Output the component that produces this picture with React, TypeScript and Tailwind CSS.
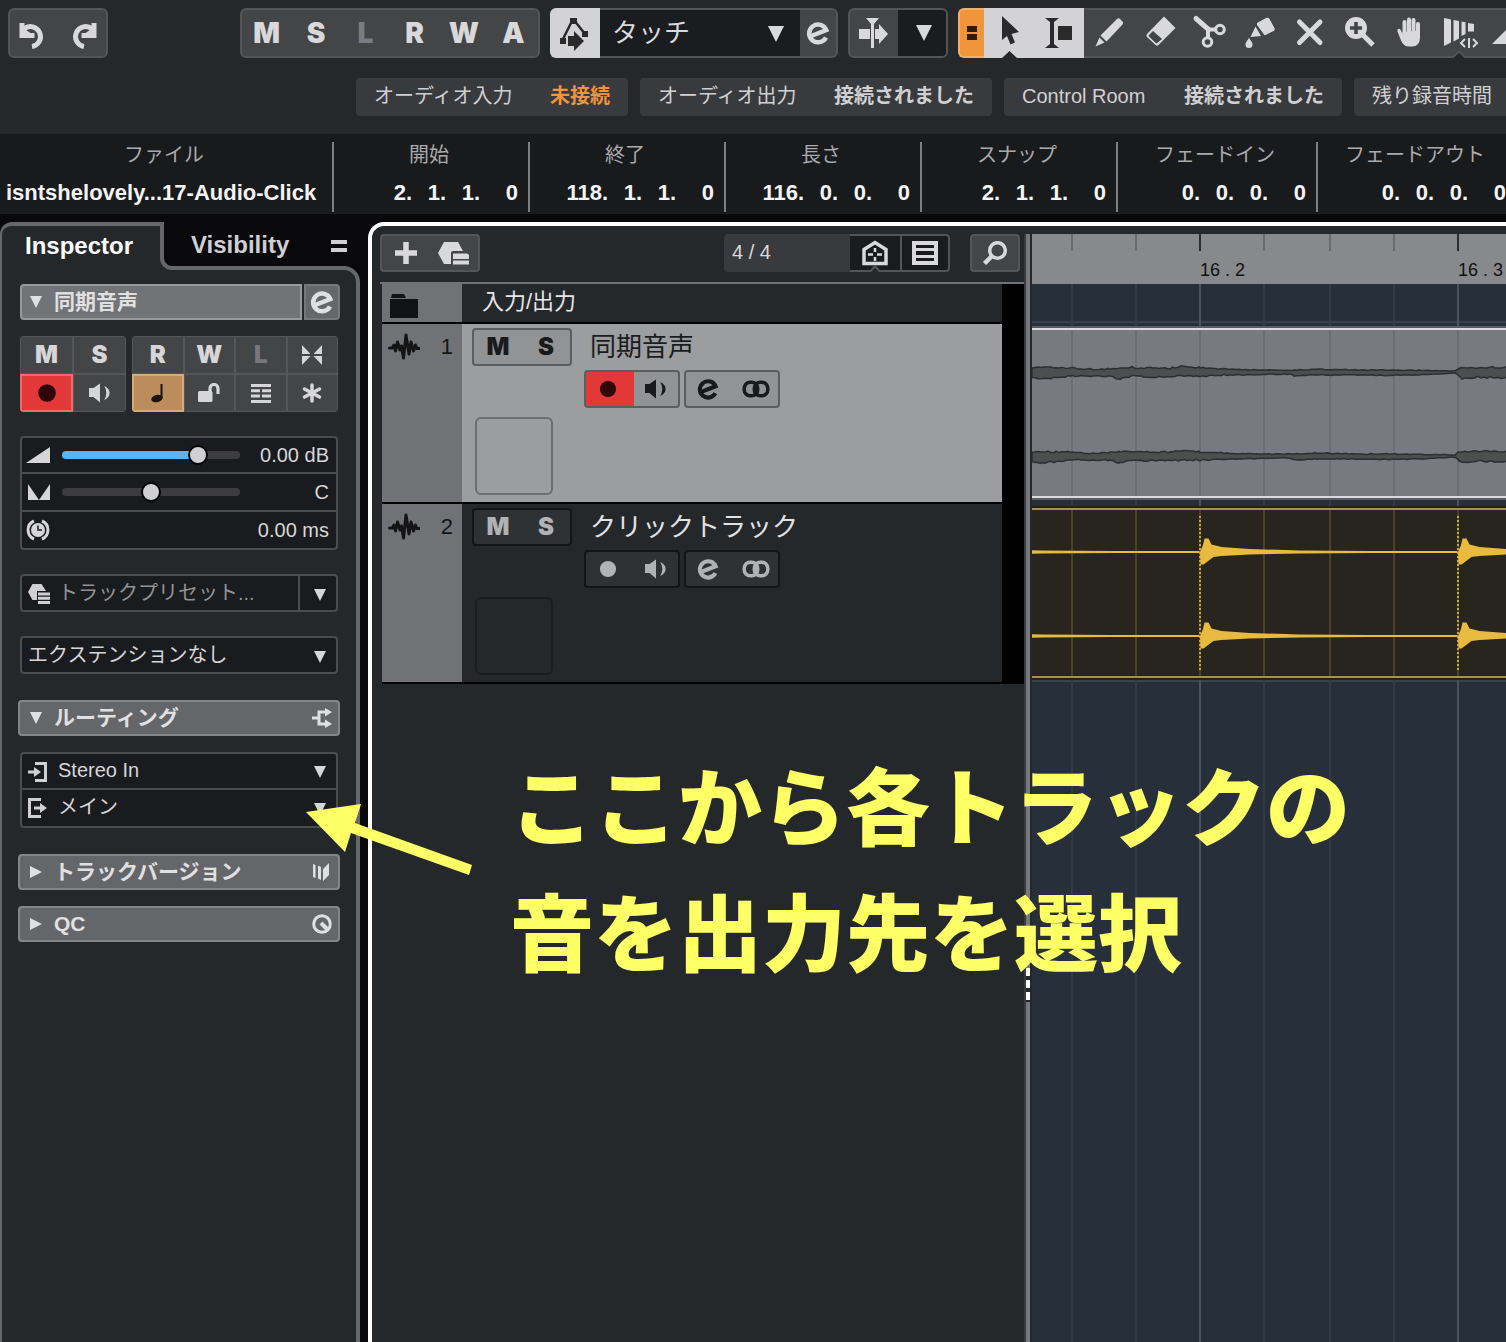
import type { ReactNode } from "react";
import clsx from "clsx";

/* ---------- data ---------- */

const AUTOMATION_STATES = ["M", "S", "L", "R", "W", "A"];

type StatusChip = {
  label: string;
  value?: string;
  warning?: boolean;
  width: string;
};

const STATUS: StatusChip[] = [
  { label: "オーディオ入力", value: "未接続", warning: true, width: "min-w-[272px]" },
  { label: "オーディオ出力", value: "接続されました", width: "min-w-[352px]" },
  { label: "Control Room", value: "接続されました", width: "min-w-[338px]" },
  { label: "残り録音時間", width: "min-w-[272px]" },
];

type InfoField = { label: string; value: string[]; width: string };

const INFO: InfoField[] = [
  { label: "開始", value: ["2.", "1.", "1.", "0"], width: "w-[196px]" },
  { label: "終了", value: ["118.", "1.", "1.", "0"], width: "w-[196px]" },
  { label: "長さ", value: ["116.", "0.", "0.", "0"], width: "w-[196px]" },
  { label: "スナップ", value: ["2.", "1.", "1.", "0"], width: "w-[196px]" },
  { label: "フェードイン", value: ["0.", "0.", "0.", "0"], width: "w-[200px]" },
  { label: "フェードアウト", value: ["0.", "0.", "0.", "0"], width: "w-[200px]" },
];

type Track = { id: number; name: string; selected: boolean };

const TRACKS: Track[] = [
  { id: 1, name: "同期音声", selected: true },
  { id: 2, name: "クリックトラック", selected: false },
];

// Beats on the timeline, in pixels from its left edge
const BEATS = Array.from({ length: 12 }, (_, i) => ({
  x: -90 + i * 258,
  label: `${16 + Math.floor(i / 4)} . ${(i % 4) + 1}`,
}));
const SIXTEENTHS = [64, 130, 194];

/* ---------- icons ---------- */

type IconProps = { className?: string };

function Tool({ children, className }: { children: ReactNode; className?: string }) {
  return (
    <svg viewBox="0 0 50 50" className={clsx("h-[50px] w-[50px] shrink-0", className)} fill="currentColor">
      {children}
    </svg>
  );
}

function UndoShape() {
  return (
    <>
      <path d="M24 38.500A10 10 0 1 0 16 21" fill="none" stroke="currentColor" strokeWidth="5" />
      <path d="M11.500 15h5v6l6 4h4v5h-15z" />
    </>
  );
}

function EditIcon({ className }: IconProps) {
  return (
    <svg viewBox="0 0 24 24" className={clsx("h-6 w-6", className)} fill="none" stroke="currentColor" strokeWidth="4.500">
      <path d="M4 15.500 20.300 9A8.900 8.900 0 1 0 20 16.500" />
    </svg>
  );
}

function Triangle({ className }: IconProps) {
  return (
    <svg viewBox="0 0 16 16" className={className} fill="currentColor">
      <path d="M0 0h16L8 16z" />
    </svg>
  );
}

function SpeakerIcon({ className }: IconProps) {
  return (
    <svg viewBox="0 0 24 24" className={clsx("h-6 w-6", className)} fill="currentColor">
      <path d="M1 7h4.500L12 2.500v19L5.500 16H1z" />
      <path d="M16 5c3 4 3 10 0 14 7.500-2.500 7.500-11.500 0-14z" />
    </svg>
  );
}

function RecordIcon({ className }: IconProps) {
  return (
    <svg viewBox="0 0 24 24" className={clsx("h-6 w-6", className)} fill="currentColor">
      <circle cx="12" cy="12" r="8.800" />
    </svg>
  );
}

function PresetIcon({ className }: IconProps) {
  return (
    <svg viewBox="0 0 32 24" className={className} fill="currentColor">
      <path d="M6 1h14l5 9H15q-2 0-2 2v11H6L0 12z" />
      <path d="M15 12.500h14l2 1.500v4H15zM15 19.500h16v4H15z" />
    </svg>
  );
}

function PresetSmallIcon() {
  return (
    <svg viewBox="0 0 22 20" className="h-5 w-[22px] text-[#d0d0d2]" fill="currentColor">
      <path d="M4.500 0h9L18 7H9v9H4.500L0 8z" />
      <path d="M10 8.500h12v3H10zM10 12.800h12v3H10zM10 17h12v3H10z" />
    </svg>
  );
}

function StereoIcon({ className }: IconProps) {
  return (
    <svg viewBox="0 0 28 20" className={className} fill="none" stroke="currentColor" strokeWidth="3.500">
      <rect x="2.200" y="3.200" width="13.500" height="13.500" rx="6" />
      <rect x="12.300" y="3.200" width="13.500" height="13.500" rx="6" />
    </svg>
  );
}

function WaveIcon({ className }: IconProps) {
  return (
    <svg viewBox="0 0 32 28" className={className} fill="none" stroke="currentColor" strokeWidth="3" strokeLinecap="round" strokeLinejoin="round">
      <path d="M1.500 15h3l1.500-3 1.500 6 2-9 2.500 8 1.500-4 2 12 2.500-23 3 19 2-12 2.500 9 2-6 1.500 3.500h2.500" />
    </svg>
  );
}

const toolIcons: { label: string; icon: ReactNode; notch?: boolean }[] = [
  {
    label: "Draw",
    icon: (
      <path d="M33 11q1.500-1.500 3 0l2.500 2.500q1.500 1.500 0 3L22.500 33.500 16.500 27.500zM15.500 29.500l5 5-9 4z" />
    ),
  },
  {
    label: "Erase",
    icon: (
      <path
        fillRule="evenodd"
        d="M30 8.500 41.500 20 24.500 37q-1.500 1.500-3 0L13 29q-1.500-1.500 0-3zM19 23l-4 4q-.8.800 0 1.600l6.700 6.300q.8.800 1.600 0L28 31z"
      />
    ),
  },
  {
    label: "Split",
    icon: (
      <g fill="none" stroke="currentColor" strokeLinecap="round">
        <path d="M12 10.500 24.500 21.500" strokeWidth="5" />
        <path d="M24.500 21.500H31M24 22v7" strokeWidth="4" />
        <circle cx="36" cy="21.500" r="4.300" strokeWidth="3" />
        <circle cx="23.500" cy="34" r="4.300" strokeWidth="3" />
      </g>
    ),
  },
  {
    label: "Glue",
    icon: (
      <path d="M23 15l9-5q2.500-1 3.500 1l5 9q.8 2-1 3l-8 4q-1 .500-1.500-.5L23 17zM21.500 18.500 27 28l-10.500 1zM15 29.500c1 3 3.500 4 3.500 7a3.500 3.500 0 0 1-7 0c0-3 2.500-4 3.500-7z" />
    ),
  },
  {
    label: "Mute",
    icon: (
      <path d="m15.500 14 20.500 20.500M36 14 15.500 34.500" fill="none" stroke="currentColor" strokeWidth="5" strokeLinecap="round" />
    ),
  },
  {
    label: "Zoom",
    icon: (
      <>
        <path
          fillRule="evenodd"
          d="M22 9a11 11 0 1 0 0 22 11 11 0 0 0 0-22zm-1.800 5h3.600v4.200H28v3.600h-4.200V26h-3.600v-4.200H16v-3.600h4.200z"
        />
        <path d="M28 26 39 37" stroke="currentColor" strokeWidth="5" />
      </>
    ),
  },
  {
    label: "Hand",
    icon: (
      <>
        <g stroke="currentColor" strokeWidth="4" strokeLinecap="round">
          <path d="M20.500 14v14M25 11.500V28M29.500 12v16M34 16v12" />
        </g>
        <path d="M18.500 24v2L17 22.500q-1-2.500-3-1.500-1 .5-.5 2.500l3.500 9q2.500 6 8 6h3q8 0 8-9v-7z" />
      </>
    ),
  },
  {
    label: "Time Warp",
    notch: true,
    icon: (
      <>
        <path d="M10 10l7 1.500v23L10 38zM19.500 12l5.500 1v17.500l-5.500 3zM27.500 13.500l4 .8V26l-4 2zM34 15l6 1v7.500h-6z" />
        <path d="m31 31-4 4 4 4M39 31l4 4-4 4M35 30v10" fill="none" stroke="currentColor" strokeWidth="2" />
      </>
    ),
  },
  { label: "Line", icon: <path d="M8 36 24 20l16 16z" /> },
];

/* ---------- top bar ---------- */

const groupClass =
  "flex h-[50px] shrink-0 items-center overflow-hidden rounded-md border-2 border-[#545557] bg-[#444547] text-[#d9d9db]";

function Toolbar() {
  return (
    <div className="flex gap-[10px] overflow-hidden px-2 pt-2">
      <div className={clsx(groupClass, "mr-[122px] w-[100px] justify-center")}>
        <button aria-label="Undo">
          <Tool>
            <UndoShape />
          </Tool>
        </button>
        <button aria-label="Redo">
          <Tool className="-scale-x-100">
            <UndoShape />
          </Tool>
        </button>
      </div>

      <div className={clsx(groupClass, "w-[300px]")}>
        {AUTOMATION_STATES.map((s) => (
          <button
            key={s}
            className={clsx("flex-1 font-['Inter'] text-[28px] font-black", s === "L" && "text-[#7b7c7f]")}
          >
            {s}
          </button>
        ))}
      </div>

      <div className="flex h-[50px] w-[288px] shrink-0 overflow-hidden rounded-md text-[#d9d9db]">
        <button aria-label="Automation panel" className="bg-[#d3d3d6] text-[#2a2a2b]">
          <Tool>
            <path d="M20 10h7v6h-7zM10 30h6v6h-6zM32 23h6v6h-6z" />
            <path d="m13 31 8.500-17M25.500 14 35 26" fill="none" stroke="currentColor" strokeWidth="2.500" />
            <path d="M18 28h6v-5l10 10-10 10v-5h-6z" />
          </Tool>
        </button>
        <div className="flex flex-1 rounded-r-md border-2 border-l-0 border-[#545557] bg-[#444547]">
          <div className="relative flex-1">
            <select
              aria-label="オートメーションモード"
              className="h-full w-full appearance-none bg-[#1b1c1f] pl-3 text-[26px] leading-8 outline-none"
            >
              <option>タッチ</option>
            </select>
            <Triangle className="pointer-events-none absolute top-4 right-4 h-4 w-4" />
          </div>
          <button aria-label="Edit" className="flex w-9 items-center justify-center">
            <EditIcon />
          </button>
        </div>
      </div>

      <div className={clsx(groupClass, "w-[100px]")}>
        <button aria-label="Auto-scroll" className="flex w-12 justify-center">
          <Tool>
            <path d="M10 21h11v10H10zM26 21h4v-5l9 10-9 10v-5h-4zM17 10h13l-5 6v24h-3V16z" />
          </Tool>
        </button>
        <button aria-label="Auto-scroll settings" className="flex h-full flex-1 items-center justify-center bg-[#1b1c1f] pl-1">
          <Triangle className="h-4 w-4" />
        </button>
      </div>

      <div className="flex h-[50px] min-w-0 flex-1 shrink-0 overflow-visible text-[#d9d9db]">
        <button aria-label="Toolbar sections" className="flex w-[26px] shrink-0 items-center justify-center rounded-l-md border-2 border-r-0 border-[#f3b06a] bg-[#f0953a] text-[#2c1c0c]">
          <svg viewBox="0 0 10 14" className="h-[14px] w-[10px]" fill="currentColor">
            <path d="M0 0h10v6H0zM0 8h10v6H0z" />
          </svg>
        </button>
        <button aria-label="Object selection" className="bg-[#d3d3d6] text-[#2a2a2b]">
          <Tool>
            <path d="M18 8v24l5-4 3.500 8.500 4.500-2L27.500 26l7.500-2z" />
            <path d="m18 50 7.500-7 7.500 7z" className="text-[#25282b]" />
          </Tool>
        </button>
        <button aria-label="Range selection" className="bg-[#d3d3d6] text-[#2a2a2b]">
          <Tool>
            <path d="M11 10h14l-5 4v22l5 4H11l5-4V14zM24 18h14v14H24z" />
          </Tool>
        </button>
        {toolIcons.map((t) => (
          <button key={t.label} aria-label={t.label} className="relative shrink-0 bg-[#444547] shadow-[inset_0_2px_#545557,inset_0_-2px_#545557]">
            <Tool>
              {t.icon}
              {t.notch && (
                <path d="m17 51 8-7.500 8 7.500z" className="fill-[#25282b] stroke-[#545557]" strokeWidth="2" />
              )}
            </Tool>
          </button>
        ))}
      </div>
    </div>
  );
}

function StatusLine() {
  return (
    <div className="flex h-[76px] gap-3 overflow-hidden pt-5 pl-[356px]">
      {STATUS.map((s) => (
        <div
          key={s.label}
          className={clsx(
            "flex h-[38px] shrink-0 items-center justify-between rounded bg-[#393a3d] px-[18px] pb-[2px] text-xl whitespace-nowrap text-[#d0d0d2]",
            s.width
          )}
        >
          <span>{s.label}</span>
          {s.value && <span className={clsx("font-bold", s.warning && "text-[#f0953a]")}>{s.value}</span>}
        </div>
      ))}
    </div>
  );
}

function InfoLine() {
  return (
    <div className="flex h-20 overflow-hidden bg-[#181a1c] pt-2 pb-[2px]">
      <div className="flex w-[334px] shrink-0 flex-col border-r-2 border-[#7c7d80]">
        <span className="pr-1 text-center text-xl leading-[26px] text-[#a9aaac]">ファイル</span>
        <span className="mt-3 pl-[6px] text-[22px] leading-[26px] font-bold text-[#f4f4f6]">
          isntshelovely...17-Audio-Click
        </span>
      </div>
      {INFO.map((f) => (
        <div key={f.label} className={clsx("flex shrink-0 flex-col border-r-2 border-[#7c7d80]", f.width)}>
          <span className="pr-1 text-center text-xl leading-[26px] text-[#a9aaac]">{f.label}</span>
          <span className="mt-3 flex justify-end pr-[10px] text-[22px] leading-[26px] font-bold text-[#f4f4f6]">
            <span>{f.value[0]}</span>
            <span className="w-[34px] text-right">{f.value[1]}</span>
            <span className="w-[34px] text-right">{f.value[2]}</span>
            <span className="w-[38px] text-right">{f.value[3]}</span>
          </span>
        </div>
      ))}
    </div>
  );
}

/* ---------- inspector ---------- */

function SectionHeader({ title, open, icon }: { title: string; open?: boolean; icon: ReactNode }) {
  return (
    <button className="-ml-[2px] flex h-9 w-[322px] items-center rounded border-2 border-[#85868a] bg-[#65666a] pr-[6px] pl-[10px] text-[#e0e0e2]">
      <Triangle className={clsx("h-3 w-3", !open && "-rotate-90")} />
      <span className="ml-3 flex-1 text-left text-[21px] leading-7 font-bold">{title}</span>
      {icon}
    </button>
  );
}

function Dropdown({ label, value, icon, muted, split }: { label: string; value: string; icon?: ReactNode; muted?: boolean; split?: boolean }) {
  return (
    <div className="relative h-9">
      <select
        aria-label={label}
        className={clsx(
          "h-full w-full appearance-none bg-transparent pb-[2px] text-xl leading-7 outline-none",
          icon ? "pl-9" : "pl-[6px]",
          muted ? "text-[#929397]" : "text-[#d6d6d8]"
        )}
      >
        <option>{value}</option>
      </select>
      {icon && <span className="pointer-events-none absolute top-2 left-[6px]">{icon}</span>}
      <span
        className={clsx(
          "pointer-events-none absolute inset-y-0 right-0 flex w-[38px] items-center justify-center border-l-2 pl-1 text-[#d6d6d8]",
          split ? "border-[#4b4c4f]" : "border-transparent"
        )}
      >
        <Triangle className="mt-[2px] h-3 w-3" />
      </span>
    </div>
  );
}

const boxClass = "w-[318px] rounded border-2 border-[#4b4c4f] bg-[#1a1b1e]";
const cellClass = "flex h-[38px] flex-1 items-center justify-center border border-[#55565a]";
const thumbClass =
  "appearance-none rounded-full [&::-webkit-slider-thumb]:h-5 [&::-webkit-slider-thumb]:w-5 [&::-webkit-slider-thumb]:appearance-none [&::-webkit-slider-thumb]:rounded-full [&::-webkit-slider-thumb]:border-2 [&::-webkit-slider-thumb]:border-black [&::-webkit-slider-thumb]:bg-[#d0d0d2]";

function Inspector() {
  return (
    <aside className="flex w-[360px] shrink-0 flex-col pt-2">
      {/* Tabs */}
      <div className="relative z-10 flex h-12">
        <button className="w-40 rounded-tl-xl border-t-4 border-l-2 border-[#66676a] bg-[#25282b] pr-1 pb-1 text-2xl font-bold text-white">
          Inspector
        </button>
        <div className="bg-[#25282b]">
          <div className="flex h-full w-[184px] items-center rounded-bl-xl border-b-4 border-l-4 border-[#66676a] bg-[#09090b] pt-[2px] pl-[27px]">
            <button className="flex-1 text-left text-2xl font-bold text-[#d0d0d2]">Visibility</button>
          </div>
        </div>
        <button aria-label="Inspector setup" className="absolute top-[18px] right-[13px]">
          <svg viewBox="0 0 16 12" className="h-3 w-4" fill="#d0d0d2">
            <path d="M0 0h16v4H0zM0 8h16v4H0z" />
          </svg>
        </button>
      </div>

      {/* Panel */}
      <div className="-mt-1 flex flex-1 flex-col rounded-tr-2xl border-t-4 border-r-4 border-l-2 border-[#66676a] bg-[#25282b] pt-[14px] pl-[18px]">
        <div className="flex w-80 gap-[2px] text-[#e0e0e2]">
          <button className="flex h-9 flex-1 items-center rounded-l border-2 border-[#97989a] bg-[#727376] pl-2">
            <Triangle className="h-3 w-3" />
            <span className="ml-3 text-[21px] leading-7 font-bold">同期音声</span>
          </button>
          <button aria-label="Edit channel" className="flex h-9 w-9 items-center justify-center rounded-r border-2 border-[#77787b] bg-[#66676a]">
            <EditIcon />
          </button>
        </div>

        <div className="mt-4 flex w-[318px] gap-[6px] font-['Inter'] text-2xl font-black text-[#d6d6d8]">
          <div className="grid w-[106px] grid-cols-2 overflow-hidden rounded bg-[#444547]">
            <button className={cellClass}>M</button>
            <button className={cellClass}>S</button>
            <button aria-label="Record enable" className="flex h-[38px] items-center justify-center border-2 border-[#f06a66] bg-[#e33838] text-[#2e0808]">
              <RecordIcon />
            </button>
            <button aria-label="Monitor" className={cellClass}>
              <SpeakerIcon />
            </button>
          </div>
          <div className="grid flex-1 grid-cols-4 overflow-hidden rounded bg-[#444547]">
            <button className={cellClass}>R</button>
            <button className={cellClass}>W</button>
            <button className={clsx(cellClass, "text-[#77787b]")}>L</button>
            <button aria-label="Freeze" className={cellClass}>
              <svg viewBox="0 0 20 20" className="h-5 w-5" fill="currentColor">
                <path d="M0 0l8.500 9H0zM0 11h8.500L0 20zM20 0v9h-8.500zM11.500 11H20v9z" />
              </svg>
            </button>
            <button aria-label="Musical timebase" className="flex h-[38px] items-center justify-center border-2 border-[#d6ab78] bg-[#bb8d5d] text-[#1f140a]">
              <svg viewBox="0 0 16 20" className="h-5 w-4" fill="currentColor">
                <path d="M10.500 1h2v14h-2z" />
                <ellipse cx="7" cy="15.500" rx="5.800" ry="3.600" transform="rotate(-15 7 15.500)" />
              </svg>
            </button>
            <button aria-label="Lock" className={cellClass}>
              <svg viewBox="0 0 22 20" className="h-5 w-[22px]" fill="currentColor">
                <rect y="8" width="14.500" height="11" rx="1.500" />
                <path d="M12 9V5.500a4 4 0 0 1 8 0V11" fill="none" stroke="currentColor" strokeWidth="3.200" />
              </svg>
            </button>
            <button aria-label="Lanes" className={cellClass}>
              <svg viewBox="0 0 20 19" className="h-[19px] w-5" fill="currentColor">
                <path d="M0 0h20v3H0zM0 5.300h9v3H0zM11 5.300h9v3h-9zM0 10.600h9v3H0zM11 10.600h9v3h-9zM0 16h20v3H0z" />
              </svg>
            </button>
            <button aria-label="Fade settings" className={cellClass}>
              <svg viewBox="0 0 20 20" className="h-5 w-5" stroke="currentColor" strokeWidth="3.500" strokeLinecap="round">
                <path d="M10 2v16M2.500 6l15 8M17.500 6l-15 8" />
              </svg>
            </button>
          </div>
        </div>

        {/* Volume, pan, delay */}
        <div className={clsx(boxClass, "mt-6 divide-y-2 divide-[#4b4c4f] text-xl text-[#d6d6d8]")}>
          <div className="flex h-9 items-center pr-[7px] pl-1">
            <svg viewBox="0 0 24 16" className="h-4 w-6" fill="currentColor">
              <path d="M0 16 24 0v16z" />
            </svg>
            <input
              type="range"
              aria-label="Volume"
              defaultValue={80}
              className={clsx(thumbClass, "ml-3 h-2 w-[178px] bg-[linear-gradient(to_right,#5ab4f8_76%,#3d3c40_76%)]")}
            />
            <span className="flex-1 text-right">0.00 dB</span>
          </div>
          <div className="flex h-[38px] items-center pr-[7px] pl-[6px]">
            <svg viewBox="0 0 22 16" className="h-4 w-[22px]" fill="currentColor">
              <path d="M0 0 11 16 22 0v16H0z" />
            </svg>
            <input type="range" aria-label="Pan" defaultValue={50} className={clsx(thumbClass, "ml-3 h-2 w-[178px] bg-[#3d3c40]")} />
            <span className="flex-1 text-right">C</span>
          </div>
          <div className="flex h-9 items-center pr-[7px] pl-1">
            <svg viewBox="0 0 24 22" className="h-[22px] w-6" fill="none" stroke="currentColor" strokeWidth="3">
              <path d="M8 2a9.800 9.800 0 0 0 0 18M16 2a9.800 9.800 0 0 1 0 18" />
              <circle cx="12" cy="11" r="7" fill="currentColor" stroke="none" />
              <path d="M12 6.500V11h4" stroke="#1a1b1e" strokeWidth="1.500" />
            </svg>
            <span className="flex-1 text-right">0.00 ms</span>
          </div>
        </div>

        <div className={clsx(boxClass, "mt-6 h-[38px]")}>
          <Dropdown label="Track preset" value="トラックプリセット..." muted split icon={<PresetSmallIcon />} />
        </div>

        <div className={clsx(boxClass, "mt-6 h-[38px]")}>
          <Dropdown label="Extension" value="エクステンションなし" />
        </div>

        <div className="mt-[26px]">
          <SectionHeader
            open
            title="ルーティング"
            icon={
              <svg viewBox="0 0 20 20" className="h-5 w-5" fill="none" stroke="currentColor" strokeWidth="3">
                <path d="M0 10h6M15 4H7v12h8" />
                <path d="M13 0l7 4-7 4.500zM13 11.500l7 4.500-7 4z" fill="currentColor" stroke="none" />
              </svg>
            }
          />
        </div>

        <div className={clsx(boxClass, "mt-4 divide-y-2 divide-[#4b4c4f]")}>
          <Dropdown
            label="Input routing"
            value="Stereo In"
            icon={
              <svg viewBox="0 0 20 20" className="h-5 w-5 text-[#d0d0d2]" fill="none" stroke="currentColor" strokeWidth="3">
                <path d="M7 1.500h10.500v17H7M0 10h8" />
                <path d="M6 5l7 5-7 5z" fill="currentColor" stroke="none" />
              </svg>
            }
          />
          <Dropdown
            label="Output routing"
            value="メイン"
            icon={
              <svg viewBox="0 0 20 20" className="h-5 w-5 text-[#d0d0d2]" fill="none" stroke="currentColor" strokeWidth="3">
                <path d="M13 1.500H1.500v17H13M6 10h7" />
                <path d="M12 5l7 5-7 5z" fill="currentColor" stroke="none" />
              </svg>
            }
          />
        </div>

        <div className="mt-[26px] flex flex-col gap-4">
          <SectionHeader
            title="トラックバージョン"
            icon={
              <svg viewBox="0 0 20 20" className="h-5 w-5" fill="currentColor">
                <path d="M1 2l2.500 1v13L1 15zM6 3.500l3 1.500v13l-3-1.500zM11 7l6-6v12l-6 6z" />
              </svg>
            }
          />
          <SectionHeader
            title="QC"
            icon={
              <svg viewBox="0 0 20 20" className="h-5 w-5" fill="none" stroke="currentColor" strokeWidth="3">
                <circle cx="10" cy="10" r="8.300" />
                <path d="m9 9 6 6" strokeWidth="4" />
              </svg>
            }
          />
        </div>
      </div>
    </aside>
  );
}

/* ---------- track list ---------- */

function TrackRow({ track }: { track: Track }) {
  const sel = track.selected;
  const box = clsx(
    "flex h-[38px] items-center overflow-hidden rounded border-2",
    sel ? "border-[#5c5d5f] bg-[#929395] text-[#191a1b]" : "border-[#131416] bg-[#2f3235] text-[#b1b2b4]"
  );

  return (
    <li className="flex h-[180px] border-b-2 border-black">
      <div className="flex w-20 shrink-0 items-start justify-between bg-[#717275] pt-[9px] pr-[9px] pl-[6px] text-[#141415]">
        <WaveIcon className="h-7 w-8" />
        <span className="text-[22px] leading-7">{track.id}</span>
      </div>
      <div className={clsx("flex-1 pt-1 pl-[10px]", sel ? "bg-[#9c9d9f]" : "bg-[#25282b]")}>
        <div className="flex items-center">
          <div className={clsx(box, "w-[100px] font-['Inter'] text-2xl font-black")}>
            <button className="flex-1">M</button>
            <button className="flex-1">S</button>
          </div>
          <span className={clsx("ml-[18px] text-[26px] leading-8", sel ? "text-[#1b1c1d]" : "text-[#e2e2e4]")}>
            {track.name}
          </span>
        </div>
        <div className="mt-1 ml-28 flex gap-1">
          <div className={clsx(box, "w-24")}>
            <button
              aria-label="Record enable"
              className={clsx("flex h-full flex-1 items-center justify-center pr-1", sel && "bg-[#e33838] text-[#2e0808]")}
            >
              <RecordIcon className="h-[22px] w-[22px]" />
            </button>
            <button aria-label="Monitor" className="flex flex-1 justify-center">
              <SpeakerIcon />
            </button>
          </div>
          <div className={clsx(box, "w-24")}>
            <button aria-label="Edit channel" className="flex flex-1 justify-center pr-1">
              <EditIcon className="h-[22px] w-[22px]" />
            </button>
            <button aria-label="Stereo" className="flex flex-1 justify-center">
              <StereoIcon className="h-5 w-7" />
            </button>
          </div>
        </div>
        <div
          className={clsx("mt-[9px] ml-[3px] h-[78px] w-[78px] rounded-md border-2", sel ? "border-[#6d6e70]" : "border-[#1b1c1e]")}
        />
      </div>
    </li>
  );
}

function TrackList() {
  return (
    <section className="w-[652px] shrink-0 pt-2 pl-2">
      <div className="flex h-12 w-[640px] items-start">
        <div className="flex h-[38px] w-[100px] items-center rounded border-2 border-[#545557] bg-[#444547] text-[#d9d9db]">
          <button aria-label="Add track" className="flex flex-1 justify-center">
            <svg viewBox="0 0 22 22" className="h-[22px] w-[22px]" stroke="currentColor" strokeWidth="5.500">
              <path d="M11 0v22M0 11h22" />
            </svg>
          </button>
          <button aria-label="Use track preset" className="flex flex-1 justify-center">
            <PresetIcon className="h-6 w-8" />
          </button>
        </div>
        <div className="ml-auto flex h-[38px] w-[226px] overflow-hidden rounded bg-[#393a3d] text-[#d9d9db]">
          <span className="w-[126px] pl-2 text-xl leading-9">4 / 4</span>
          <button aria-label="Find tracks" className="relative flex w-[50px] items-center justify-center border-2 border-r-0 border-l-0 border-[#545557] bg-[#1a1b1e]">
            <svg viewBox="0 0 26 26" className="h-[26px] w-[26px]" fill="none" stroke="currentColor">
              <path d="M2 23.500V9.500L13 2.500l11 7v14z" strokeWidth="3.500" />
              <path d="M13 8v4M13 17v4M6 14.500h5M15 14.500h5" strokeWidth="2.500" />
            </svg>
            <svg viewBox="0 0 14 8" className="absolute -bottom-[3px] h-2 w-[14px] fill-[#25282b] stroke-[#545557]" strokeWidth="2">
              <path d="M0 9 7 1l7 8" />
            </svg>
          </button>
          <button aria-label="Track visibility" className="flex w-[50px] items-center justify-center rounded-r border-2 border-[#545557] bg-[#1a1b1e]">
            <svg viewBox="0 0 26 24" className="h-6 w-[26px]" fill="none" stroke="currentColor">
              <path d="M2 2h22v20H2z" strokeWidth="4" />
              <path d="M2 8.500h22M2 15.500h22" strokeWidth="3" />
            </svg>
          </button>
        </div>
        <button aria-label="Search" className="ml-5 flex h-[38px] w-[50px] items-center justify-center rounded border-2 border-[#545557] bg-[#444547] text-[#d9d9db]">
          <svg viewBox="0 0 24 24" className="h-6 w-6" fill="none" stroke="currentColor">
            <circle cx="14.500" cy="9.500" r="7.800" strokeWidth="3.500" />
            <path d="M8.500 15.500 1.500 22.500" strokeWidth="4.500" />
          </svg>
        </button>
      </div>

      <div className="border-t-2 border-[#717275] pl-[2px]">
        <ul className="bg-black pr-[22px]">
          <li className="flex h-10 border-b-2 border-black bg-[#25282b]">
            <span className="w-20 bg-[#717275] pt-[10px] pl-2">
              <svg viewBox="0 0 28 24" className="h-6 w-7" fill="#111213">
                <path d="M2 0h12l2 4H1zM0 5h28v19H0z" />
              </svg>
            </span>
            <span className="pl-5 text-[22px] leading-9 text-[#e6e6e8]">入力/出力</span>
          </li>
          {TRACKS.map((t) => (
            <TrackRow key={t.id} track={t} />
          ))}
        </ul>
      </div>
    </section>
  );
}

/* ---------- timeline ---------- */

function Grid({ major, minor, className }: { major: string; minor: string; className?: string }) {
  return (
    <svg className={clsx("pointer-events-none absolute inset-0 h-full w-full", className)} strokeWidth="2">
      {BEATS.map((b) => (
        <g key={b.x}>
          <line x1={b.x} x2={b.x} y1="0" y2="100%" className={major} />
          {SIXTEENTHS.map((s) => (
            <line key={s} x1={b.x + s} x2={b.x + s} y1="0" y2="100%" className={minor} />
          ))}
        </g>
      ))}
    </svg>
  );
}

// [x, height above the centre line, depth below it]
const ENVELOPE = [
  [0, 4.5, 5], [10, 4.5, 7], [24, 4, 5.5], [40, 4, 4], [64, 2.5, 4], [78, 3.5, 4], [88, 4.5, 7], [100, 4.5, 3.5],
  [118, 4, 5], [140, 4, 4], [149, 5.5, 4], [168, 4.5, 4], [192, 3, 3], [228, 2, 2.5], [258, 2, 2], [262, 2, 4],
  [284, 3, 3], [330, 2, 3], [360, 2, 3.5], [396, 1.5, 2.5], [423, 1, 1], [427, 4, 4], [430, 4.5, 7], [446, 4.5, 5],
  [460, 5, 5.5], [474, 4.5, 6], [520, 4, 5], [620, 2, 3], [680, 1, 1], [686, 5, 6], [820, 3, 3], [940, 1, 1],
];

function noise(n: number) {
  const v = Math.sin(n * 12.9898) * 43758.5453;
  return (v - Math.floor(v) - 0.5) * 1.8;
}

function tonePath(mid: number) {
  const top: string[] = [];
  const bottom: string[] = [];
  for (let i = 0; i < ENVELOPE.length - 1; i++) {
    const [x0, u0, d0] = ENVELOPE[i];
    const [x1, u1, d1] = ENVELOPE[i + 1];
    for (let x = x0; x < x1; x += 3) {
      const t = (x - x0) / (x1 - x0);
      const up = u0 + (u1 - u0) * t;
      const down = d0 + (d1 - d0) * t;
      const k = Math.min(up, 4) / 4;
      top.push(`${x} ${(mid - up + noise(x + mid) * k).toFixed(1)}`);
      bottom.unshift(`${x} ${(mid + down + noise(x * 3 + mid) * k).toFixed(1)}`);
    }
  }
  return `M${top.join("L")}L${bottom.join("L")}Z`;
}

function clickPath(x: number, y: number) {
  return `M${x} ${y}l3-7 1.500-6.500h4l3 6 10 2.500 28 2 50 1.500 70 .5h88v2h-88l-70 .5-50 1-28 1.500-8 1-6 4.500-4 3h-3z`;
}

function Timeline() {
  return (
    <section className="flex min-w-0 flex-1 flex-col overflow-hidden pt-2">
      <div className="relative h-[50px] bg-[#88898c]">
        <div className="absolute inset-x-0 top-0 h-[17px]">
          <Grid major="stroke-[#2d2d30]" minor="stroke-[#6a6b6e]" />
        </div>
        {BEATS.filter((b) => b.x > 0).map((b) => (
          <span
            key={b.x}
            className={clsx(
              "absolute top-[26px] text-lg leading-5 whitespace-nowrap text-[#111]",
              b.x > 430 && "hidden 2xl:block"
            )}
            style={{ left: b.x }}
          >
            {b.label}
          </span>
        ))}
      </div>

      <div className="relative flex flex-1 flex-col bg-[#27303a]">
        <Grid major="stroke-[#4a525c]" minor="stroke-[#323b45]" />

        <div className="h-[39px] border-b-2 border-[#36424c]" />

        {/* Selected audio event */}
        <div className="relative mt-[3px] h-[174px] border-y-2 border-[#5b5b62] bg-[#787a7f]">
          <Grid major="stroke-[#6c6e73]" minor="stroke-[#6c6e73]" />
          <svg className="absolute inset-0 h-full w-full">
            <path d={tonePath(44)} className="fill-[#4d4e50] stroke-[#2b2f31]" strokeWidth="1.500" />
            <path d={tonePath(128)} className="fill-[#4d4e50] stroke-[#2b2f31]" strokeWidth="1.500" />
          </svg>
          <div className="absolute inset-0 border-y-2 border-[#dcd9e0]" />
        </div>

        {/* Click event */}
        <div className="relative mt-[6px] h-[174px] border-y-2 border-[#2a2010] bg-[#28251f]">
          <Grid major="stroke-[#4a4127]" minor="stroke-[#4a4127]" />
          <svg className="absolute inset-0 h-full w-full">
            {BEATS.map((b) => (
              <g key={b.x} className="fill-[#e8bb40]">
                <line x1={b.x} x2={b.x} y1="8" y2="162" className="stroke-[#c9a548]" strokeWidth="2" strokeDasharray="2 2" />
                <path d={clickPath(b.x, 44)} />
                <path d={clickPath(b.x, 128)} />
              </g>
            ))}
          </svg>
          <div className="absolute inset-0 border-y-2 border-[#a8904e]" />
        </div>

        <div className="h-[2px] bg-[#36424c]" />
      </div>
    </section>
  );
}

/* ---------- page ---------- */

export default function App() {
  return (
    <div className="flex min-h-screen flex-col overflow-hidden bg-[#25282b] font-['Liberation_Sans','Noto_Sans_CJK_JP',sans-serif]">
      <header>
        <Toolbar />
        <StatusLine />
        <InfoLine />
      </header>

      <main className="relative flex flex-1 gap-2 bg-[#09090b]">
        <Inspector />

        <div className="mt-2 flex min-w-0 flex-1 rounded-tl-2xl border-t-4 border-l-4 border-white bg-[#25282b]">
          <TrackList />
          <div className="relative mt-2 w-2 shrink-0 border-r-2 border-l-2 border-r-[#25282b] border-l-[#3a3b3f] bg-[#77787b]">
            <svg viewBox="0 0 4 34" className="absolute top-[734px] left-0 h-[34px] w-1">
              <path d="M0 0h4v34H0z" fill="#25282b" />
              <path d="M2 0v34" stroke="#fff" strokeWidth="4" strokeDasharray="8 4" />
            </svg>
          </div>
          <Timeline />
        </div>

        {/* Callout */}
        <div className="pointer-events-none absolute top-[533px] left-[510px] text-[84px] leading-[126px] font-black whitespace-nowrap text-[#ffff66]">
          <p>ここから各トラックの</p>
          <p>音を出力先を選択</p>
        </div>
        <svg viewBox="0 0 166 72" className="pointer-events-none absolute top-[590px] left-[306px] h-[72px] w-[166px]" fill="#ffff66">
          <path d="M0 8 55 0 49 19 166 61 163 71 45 29 39 48z" />
        </svg>
      </main>
    </div>
  );
}
